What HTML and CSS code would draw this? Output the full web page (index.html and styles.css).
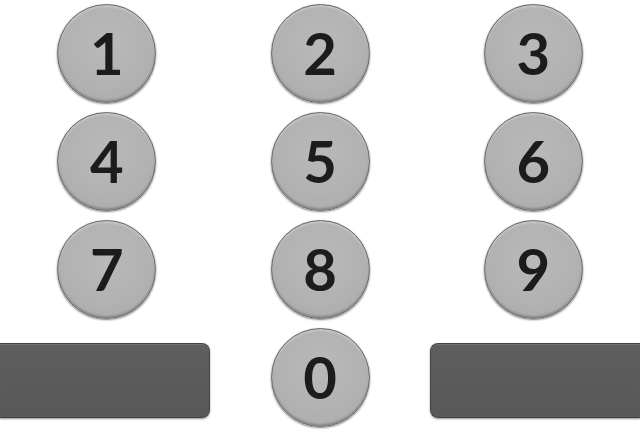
FILE: index.html
```html
<!DOCTYPE html>
<html>
<head>
<meta charset="utf-8">
<link rel="stylesheet" href="styles.css">
</head>
<body>
<div class="pad">
  <div class="cell"><div class="key">1</div></div>
  <div class="cell"><div class="key">2</div></div>
  <div class="cell"><div class="key">3</div></div>
  <div class="cell"><div class="key">4</div></div>
  <div class="cell"><div class="key">5</div></div>
  <div class="cell"><div class="key">6</div></div>
  <div class="cell"><div class="key">7</div></div>
  <div class="cell"><div class="key">8</div></div>
  <div class="cell"><div class="key">9</div></div>
  <div class="cell start"><div class="bar bar-left"></div></div>
  <div class="cell"><div class="key">0</div></div>
  <div class="cell end"><div class="bar bar-right"></div></div>
</div>
</body>
</html>
```
FILE: styles.css
```css
html, body {
  margin: 0;
  padding: 0;
  background: #ffffff;
  overflow: hidden;
  width: 640px;
  height: 432px;
}
.pad {
  display: grid;
  grid-template-columns: 213.5px 213px 213.5px;
  grid-auto-rows: 99px;
  row-gap: 9px;
  padding-top: 4px;
}
.cell {
  display: flex;
  justify-content: center;
  align-items: flex-start;
}
.cell.start {
  justify-content: flex-start;
}
.cell.end {
  justify-content: flex-end;
}
.key {
  flex-shrink: 0;
  width: 99px;
  height: 99px;
  box-sizing: border-box;
  border-radius: 50%;
  border: 1px solid #666666;
  background: radial-gradient(circle at 50% 40%, #b9b9b9 0%, #b2b2b2 55%, #a9a9a9 100%);
  box-shadow: 0 1px 2px rgba(0,0,0,0.5), inset 0 -2px 2px rgba(0,0,0,0.2), inset 0 2px 2px rgba(255,255,255,0.25);
  display: flex;
  align-items: center;
  justify-content: center;
  font-family: "Lato", "DejaVu Sans", sans-serif;
  font-weight: bold;
  font-size: 58px;
  line-height: 1;
  color: #1c1c1c;
  padding-bottom: 2px;
}
.bar {
  flex-shrink: 0;
  height: 75px;
  margin-top: 15px;
  box-sizing: border-box;
  background: linear-gradient(#5e5e5e, #585858);
  border: 1px solid #444444;
  box-shadow: 0 1px 2px rgba(0,0,0,0.45), inset 0 1px 1px rgba(255,255,255,0.12);
}
.bar-left {
  width: 210px;
  border-left: none;
  border-radius: 0 8px 8px 0;
}
.bar-right {
  width: 210px;
  border-right: none;
  border-radius: 8px 0 0 8px;
}
```
